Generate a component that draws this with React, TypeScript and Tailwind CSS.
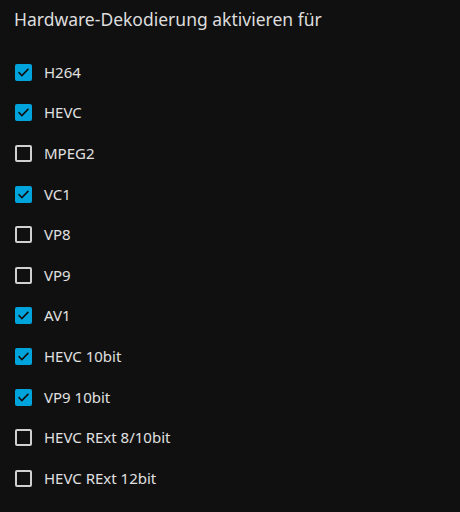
import React from 'react';

const CODECS: { label: string; checked: boolean }[] = [
  { label: 'H264', checked: true },
  { label: 'HEVC', checked: true },
  { label: 'MPEG2', checked: false },
  { label: 'VC1', checked: true },
  { label: 'VP8', checked: false },
  { label: 'VP9', checked: false },
  { label: 'AV1', checked: true },
  { label: 'HEVC 10bit', checked: true },
  { label: 'VP9 10bit', checked: true },
  { label: 'HEVC RExt 8/10bit', checked: false },
  { label: 'HEVC RExt 12bit', checked: false },
];

function Box({ checked }: { checked: boolean }) {
  if (checked) {
    return (
      <span className="flex h-[17px] w-[17px] shrink-0 items-center justify-center rounded-[2px] bg-[#00a4dc]">
        <svg width="13" height="13" viewBox="0 0 24 24" fill="none">
          <path d="M4 12.5l5 5L20 6.5" stroke="#101010" strokeWidth="3" strokeLinecap="square" />
        </svg>
      </span>
    );
  }
  return <span className="h-[17px] w-[17px] shrink-0 rounded-[2px] border-2 border-[#d0d0d0]" />;
}

export default function App() {
  return (
    <div
      className="h-[512px] w-[460px] bg-[#101010] text-[#dddddd]"
      style={{ fontFamily: '"Noto Sans", sans-serif' }}
    >
      <h2 className="px-[14px] pt-[3px] text-[17.5px] leading-[32px] font-normal">
        Hardware-Dekodierung aktivieren für
      </h2>
      <div className="mt-[17px] flex flex-col">
        {CODECS.map((c) => (
          <label key={c.label} className="flex h-[40.6px] items-center gap-[12px] pl-[15px]">
            <Box checked={c.checked} />
            <span className="text-[15px] leading-none text-[#e0e0e0]">{c.label}</span>
          </label>
        ))}
      </div>
    </div>
  );
}
